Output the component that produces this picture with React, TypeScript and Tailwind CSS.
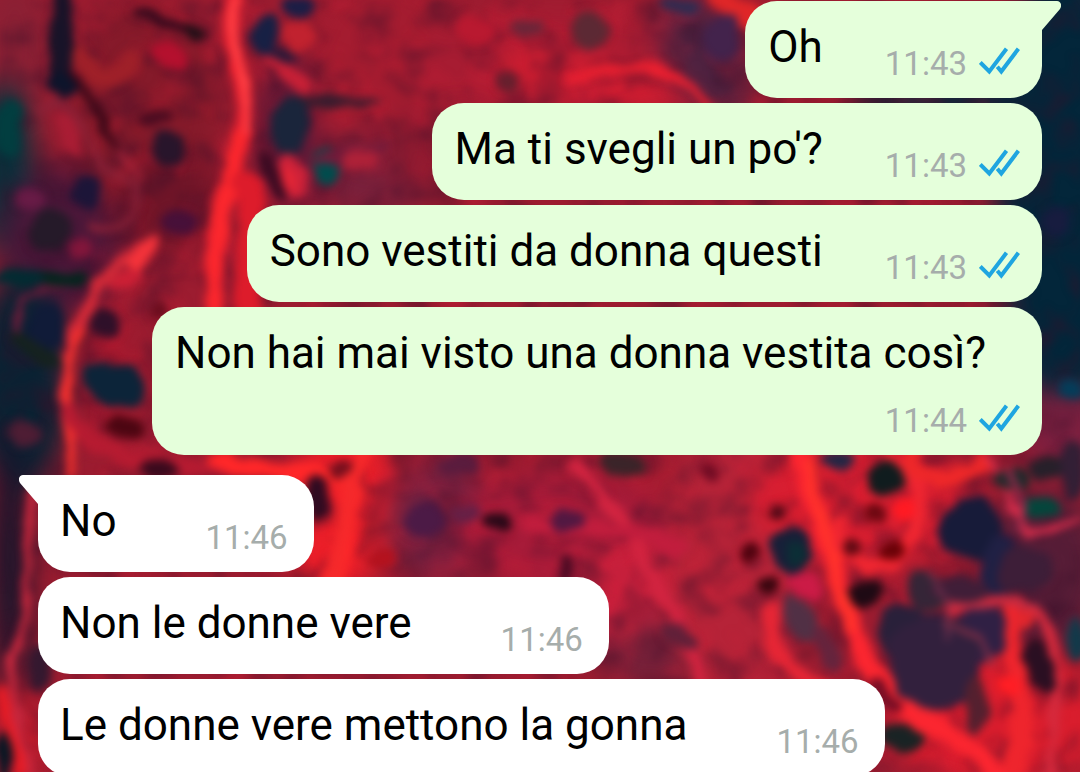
import React from "react";

interface Message {
  id: number;
  text: string;
  time: string;
  mine: boolean;
  wrapTime?: boolean;
}

type Blob = [number, number, number, number, number, string];
type Vein = [string, number, string];

const messages: Message[] = [
  { id: 1, text: "Oh", time: "11:43", mine: true },
  { id: 2, text: "Ma ti svegli un po'?", time: "11:43", mine: true },
  { id: 3, text: "Sono vestiti da donna questi", time: "11:43", mine: true },
  {
    id: 4,
    text: "Non hai mai visto una donna vestita così?",
    time: "11:44",
    mine: true,
    wrapTime: true,
  },
  { id: 5, text: "No", time: "11:46", mine: false },
  { id: 6, text: "Non le donne vere", time: "11:46", mine: false },
  { id: 7, text: "Le donne vere mettono la gonna", time: "11:46", mine: false },
];

// Large colour areas: cx, cy, rx, ry, rotation, fill
const areas: Blob[] = [
  [15, 45, 35, 70, 0, "#8b2034"],
  [5, 170, 30, 90, 0, "#07303b"],
  [60, 240, 60, 75, 0, "#4b1739"],
  [20, 385, 50, 110, 0, "#0a2233"],
  [10, 560, 20, 130, 0, "#17152b"],
  [145, 110, 75, 110, 0, "#851a2a"],
  [170, 200, 50, 50, 0, "#6f1528"],
  [100, 380, 35, 60, 0, "#a3192e"],
  [300, 130, 45, 80, 0, "#5f1836"],
  [380, 75, 75, 100, 0, "#a41c30"],
  [375, 175, 60, 40, 0, "#78203b"],
  [560, 65, 150, 60, 0, "#a71c32"],
  [415, 150, 30, 40, 0, "#8a1a30"],
  [590, 80, 100, 24, 12, "#d31d31"],
  [705, 55, 40, 65, -30, "#4e2240"],
  [1065, 190, 70, 230, 0, "#03263a"],
  [950, 100, 100, 20, 0, "#03263a"],
  [1065, 430, 45, 40, 0, "#7c2040"],
  [340, 510, 55, 90, 10, "#ec1f29"],
  [440, 520, 55, 60, 0, "#6f2040"],
  [560, 530, 110, 60, 0, "#a71b39"],
  [640, 600, 90, 60, 0, "#c9203c"],
  [650, 655, 50, 35, 0, "#752039"],
  [740, 560, 75, 150, 0, "#b62338"],
  [860, 500, 110, 70, 0, "#d81e30"],
  [1045, 570, 60, 80, 0, "#571d37"],
  [1000, 720, 110, 70, 0, "#d91d2d"],
  [20, 740, 22, 50, 0, "#c91c2c"],
];

// Bright fibres: path, width, colour
const veins: Vein[] = [
  ["M236 0 C222 40 250 70 242 130 C232 190 212 220 214 310", 19, "#ed2230"],
  ["M238 0 C224 40 252 70 244 130", 8, "#ff4246"],
  ["M238 140 C228 200 212 230 214 310", 14, "#fb272d"],
  ["M242 180 C265 210 240 250 250 310", 24, "#dd1c2b"],
  ["M152 242 C120 258 92 285 82 320 C60 350 66 410 72 450", 12, "#d42a38"],
  ["M82 330 C62 360 70 410 70 475", 8, "#f5302d"],
  ["M150 245 L134 262", 16, "#f5333a"],
  ["M70 410 C80 450 130 465 230 468", 16, "#b61b31"],
  ["M222 460 C270 480 340 460 352 490 C340 530 350 560 320 600", 20, "#ff2729"],
  ["M365 450 C345 490 350 530 325 590", 15, "#f5292b"],
  ["M35 490 C20 530 40 600 12 660 C8 700 22 730 30 772", 9, "#c6273d"],
  ["M0 690 L22 770", 10, "#e91c25"],
  ["M272 60 C290 70 298 80 304 88", 15, "#c72036"],
  ["M574 80 C630 55 680 70 710 105", 10, "#ea2030"],
  ["M720 0 L765 25", 26, "#df2628"],
  ["M575 465 C600 500 620 500 648 570 C670 610 690 630 705 690", 12, "#d22440"],
  ["M800 455 C812 500 830 550 845 600 C860 660 880 700 950 735 C975 750 990 760 1000 780", 20, "#fb2630"],
  ["M808 460 C820 520 838 570 852 630", 10, "#ff322b"],
  ["M770 610 C770 650 790 690 860 695", 16, "#e62635"],
  ["M890 460 C930 480 930 530 890 565 C860 570 840 560 840 520", 14, "#ef2631"],
  ["M915 450 C900 480 960 490 985 460", 14, "#ee2829"],
  ["M950 610 C970 595 1010 595 1035 610 C1060 630 1058 690 1050 772", 10, "#d52a3d"],
  ["M990 460 C1010 490 1015 520 1030 535 L1080 518", 7, "#d32c4a"],
  ["M1010 610 C1005 660 1035 700 1015 772", 20, "#ee252d"],
  ["M40 110 C90 75 80 180 130 180 C150 210 135 230 90 228", 6, "#8c2238"],
  ["M74 80 L140 180", 4, "#a8243a"],
  ["M80 55 C90 80 110 90 130 60", 18, "#9f2029"],
  ["M20 330 C10 300 30 285 60 288", 6, "#6a1c3a"],
  ["M530 525 C560 530 620 520 680 550", 16, "#c11d3d"],
];

// Dark cells and cavities: cx, cy, rx, ry, rotation, fill
const cells: Blob[] = [
  [61, 40, 12, 60, 0, "#181328"],
  [62, 85, 16, 12, 0, "#0d142b"],
  [95, 110, 5, 48, -32, "#3d0919"],
  [170, 24, 42, 6, 18, "#330a1d"],
  [195, 33, 10, 6, 20, "#1f1017"],
  [155, 118, 18, 9, 0, "#4a0c21"],
  [168, 148, 18, 16, 10, "#28152b"],
  [86, 192, 14, 18, 0, "#1c1538"],
  [52, 230, 22, 20, 0, "#251a29"],
  [8, 130, 13, 28, 0, "#023e40"],
  [60, 278, 32, 6, 3, "#05251e"],
  [20, 278, 26, 7, 0, "#032b32"],
  [47, 327, 19, 24, 0, "#101b38"],
  [36, 350, 28, 8, 35, "#16221f"],
  [104, 320, 14, 16, 0, "#2e1029"],
  [115, 385, 34, 22, 15, "#0c2439"],
  [125, 427, 18, 11, 0, "#4c0612"],
  [160, 470, 18, 9, 0, "#3a0a1d"],
  [178, 222, 18, 12, 0, "#471039"],
  [160, 310, 9, 10, 0, "#690d1d"],
  [265, 34, 14, 22, 15, "#172044"],
  [285, 56, 16, 6, 10, "#2a1938"],
  [297, 7, 17, 10, 0, "#1b1e46"],
  [335, 102, 48, 6, 0, "#391c2e"],
  [290, 125, 20, 30, 0, "#1a253b"],
  [325, 166, 14, 19, 0, "#004c4d"],
  [273, 177, 10, 26, -28, "#3b0b22"],
  [350, 155, 8, 40, 80, "#711b3a"],
  [317, 499, 13, 22, 0, "#300b21"],
  [340, 468, 10, 9, 0, "#75101e"],
  [590, 30, 20, 17, 0, "#5c2934"],
  [526, 28, 18, 9, 0, "#6a2639"],
  [680, 6, 18, 8, 0, "#302c51"],
  [722, 40, 18, 27, 20, "#43234c"],
  [508, 83, 12, 12, 0, "#65202e"],
  [497, 522, 16, 8, 0, "#280918"],
  [425, 520, 20, 18, 0, "#4c1a46"],
  [460, 465, 24, 12, 0, "#5a1c3e"],
  [465, 512, 14, 10, 0, "#662046"],
  [567, 520, 16, 12, 0, "#521842"],
  [565, 570, 6, 15, -10, "#4a0b24"],
  [622, 464, 24, 12, 15, "#3a2429"],
  [680, 635, 20, 9, 25, "#612039"],
  [382, 560, 13, 9, 0, "#b5121e"],
  [885, 479, 19, 16, -15, "#101c1e"],
  [839, 460, 18, 9, 0, "#242644"],
  [776, 513, 10, 7, -20, "#500a18"],
  [791, 550, 20, 24, 0, "#171f38"],
  [796, 553, 10, 12, 0, "#0c2e36"],
  [750, 552, 9, 9, 0, "#500310"],
  [768, 584, 11, 10, 0, "#38060f"],
  [852, 548, 11, 10, 0, "#600a14"],
  [893, 550, 13, 12, 0, "#6a0208"],
  [875, 513, 11, 9, 0, "#6d0812"],
  [710, 472, 9, 8, 0, "#700c24"],
  [865, 593, 16, 16, 0, "#1e0a14"],
  [972, 529, 32, 33, 0, "#171b39"],
  [1002, 565, 22, 28, 0, "#202044"],
  [1025, 570, 28, 24, 0, "#3d1e38"],
  [927, 590, 20, 20, 0, "#352537"],
  [960, 590, 30, 13, 0, "#401e38"],
  [905, 635, 24, 32, 0, "#29203a"],
  [980, 635, 28, 29, 0, "#302044"],
  [935, 662, 46, 50, -10, "#32203d"],
  [975, 705, 12, 28, 0, "#54202f"],
  [800, 620, 14, 26, -30, "#513045"],
  [828, 650, 12, 24, -25, "#65243d"],
  [805, 655, 8, 7, 0, "#83192d"],
  [886, 695, 7, 22, -40, "#750e25"],
  [900, 738, 23, 14, 0, "#192324"],
  [1039, 665, 14, 28, -15, "#2a0f22"],
  [1040, 508, 22, 11, 0, "#04463c"],
  [1012, 480, 20, 12, 0, "#202a2c"],
  [1048, 468, 18, 10, 0, "#26202a"],
  [1076, 640, 9, 22, 0, "#12394a"],
  [1072, 470, 12, 30, 0, "#321f35"],
  [40, 665, 12, 24, 0, "#34182f"],
  [4, 755, 8, 25, 0, "#0b1724"],
  [1055, 220, 16, 15, 0, "#171c3f"],
  [1072, 390, 12, 9, 0, "#043d5a"],
];

// Small warm highlights over the cells
const highlights: Blob[] = [
  [300, 36, 17, 16, 0, "#c1222f"],
  [169, 56, 19, 13, 20, "#b4102e"],
  [294, 177, 11, 22, -22, "#ce2239"],
  [292, 178, 5, 12, -22, "#e52535"],
  [361, 160, 18, 12, 0, "#ae2138"],
  [70, 135, 9, 25, -18, "#a91d34"],
  [30, 200, 14, 14, 0, "#681b46"],
  [82, 250, 12, 11, 0, "#82163b"],
  [125, 280, 18, 8, -30, "#cd2035"],
  [475, 30, 20, 15, 0, "#b91930"],
  [25, 435, 15, 13, 0, "#4e1d34"],
  [905, 510, 10, 12, 0, "#ff1a23"],
  [805, 586, 18, 12, 25, "#cb1b46"],
  [1025, 620, 9, 11, 0, "#e1262d"],
  [1010, 684, 13, 11, 0, "#ff1e25"],
];

// Thin strands that cross the dark cavities
const strands: Vein[] = [
  ["M948 640 L945 602 L932 570", 4, "#77304d"],
  ["M945 622 L978 640 L994 668", 4, "#8c3047"],
  ["M950 604 L1035 604", 6, "#c32c42"],
  ["M1008 470 L1022 500 L1018 530", 5, "#9c2a4c"],
];

const renderBlobs = (blobs: Blob[]) =>
  blobs.map(([cx, cy, rx, ry, angle, fill]) => (
    <ellipse
      key={`${cx}-${cy}`}
      cx={cx}
      cy={cy}
      rx={rx}
      ry={ry}
      fill={fill}
      transform={`rotate(${angle} ${cx} ${cy})`}
    />
  ));

const renderVeins = (paths: Vein[]) =>
  paths.map(([d, width, color]) => (
    <path key={d} d={d} stroke={color} strokeWidth={width} strokeLinecap="round" fill="none" />
  ));

const Wallpaper: React.FC = () => (
  <svg
    aria-hidden="true"
    className="absolute inset-0 h-full w-full"
    viewBox="0 0 1080 772"
    preserveAspectRatio="xMidYMid slice"
  >
    <defs>
      <filter id="soft" x="-20%" y="-20%" width="140%" height="140%" colorInterpolationFilters="sRGB">
        <feGaussianBlur stdDeviation="14" />
      </filter>
      <filter id="organic" x="-5%" y="-5%" width="110%" height="110%" colorInterpolationFilters="sRGB">
        <feTurbulence type="fractalNoise" baseFrequency="0.04" numOctaves="2" seed="4" result="noise" />
        <feDisplacementMap in="SourceGraphic" in2="noise" scale="14" xChannelSelector="R" yChannelSelector="G" />
        <feGaussianBlur stdDeviation="4" />
      </filter>
      <filter id="shade" x="0" y="0" width="100%" height="100%" colorInterpolationFilters="sRGB">
        <feTurbulence type="fractalNoise" baseFrequency="0.028 0.034" numOctaves="3" seed="9" />
        <feColorMatrix values="0 0 0 0 0.22  0 0 0 0 0.06  0 0 0 0 0.16  2.4 0 0 0 -1.05" />
        <feGaussianBlur stdDeviation="3" />
      </filter>
      <filter id="glow" x="0" y="0" width="100%" height="100%" colorInterpolationFilters="sRGB">
        <feTurbulence type="fractalNoise" baseFrequency="0.028" numOctaves="3" seed="21" />
        <feColorMatrix values="0 0 0 0 0.86  0 0 0 0 0.13  0 0 0 0 0.22  0 2.4 0 0 -1.1" />
        <feGaussianBlur stdDeviation="3" />
      </filter>
    </defs>
    <rect width="1080" height="772" fill="#9c1c30" />
    <g filter="url(#soft)">{renderBlobs(areas)}</g>
    <rect x="90" width="900" height="772" filter="url(#glow)" opacity="0.35" />
    <rect width="1080" height="772" filter="url(#shade)" opacity="0.5" />
    <g filter="url(#organic)">
      {renderVeins(veins)}
      {renderBlobs(cells)}
      {renderBlobs(highlights)}
      {renderVeins(strands)}
    </g>
  </svg>
);

const ReadTicks: React.FC = () => (
  <svg
    role="img"
    aria-label="Read"
    className="mb-1.5 h-7 w-[41px]"
    viewBox="0 0 41 28"
    fill="none"
    stroke="#1fa5e0"
    strokeWidth="4"
  >
    <path d="M1.3 15.5 L10.3 24.5 L27.5 1.8" />
    <path d="M18.3 19.8 L22.3 24.5 L39.4 1.8" />
  </svg>
);

const Tail: React.FC<{ mine: boolean }> = ({ mine }) => (
  <svg
    aria-hidden="true"
    className={`absolute top-0 h-[31px] w-5 ${
      mine ? "left-full -ml-px text-[#e5ffdb]" : "right-full -mr-px -scale-x-100 text-white"
    }`}
    viewBox="0 0 20 31"
    fill="currentColor"
  >
    <path d="M0 0 H16 C19.5 0 21.5 4 19 8 L1 29 V31 H0 Z" />
  </svg>
);

const Bubble: React.FC<{ message: Message; first: boolean }> = ({ message, first }) => {
  const { text, time, mine, wrapTime } = message;

  // The side that carries the tail keeps a square top corner
  const corners = !first ? "" : mine ? "rounded-tr-none" : "rounded-tl-none";

  return (
    <li
      className={`relative flex max-w-[890px] shrink-0 rounded-[32px] ${corners} ${
        mine
          ? "self-end bg-[#e5ffdb] pr-[22px] pl-[23px]"
          : "self-start bg-white pr-[26px] pl-[22px]"
      } ${wrapTime ? "h-[148px] flex-col" : mine ? "h-[97px] gap-[62px]" : "h-[97px] gap-[89px]"}`}
    >
      {first && <Tail mine={mine} />}
      <p className={`pt-5 text-[44px] leading-[52px] text-black ${wrapTime ? "pr-[34px]" : ""}`}>
        {text}
      </p>
      <div
        className={`flex items-center gap-3 self-end pb-[14px] text-[33px] leading-10 text-[#a6adab] ${
          wrapTime ? "mt-auto" : ""
        }`}
      >
        <time>{time}</time>
        {mine && <ReadTicks />}
      </div>
    </li>
  );
};

const App: React.FC = () => {
  return (
    <main className="relative h-screen overflow-hidden bg-[#9c1c30] font-[Roboto,sans-serif]">
      <Wallpaper />
      <ul className="relative flex flex-col gap-[5px] px-[38px] pt-px">
        {messages.map((message, index) => {
          const first = index === 0 || messages[index - 1].mine !== message.mine;
          return (
            <React.Fragment key={message.id}>
              {first && index > 0 && <li aria-hidden="true" className="h-2.5" />}
              <Bubble message={message} first={first} />
            </React.Fragment>
          );
        })}
      </ul>
    </main>
  );
};

export default App;
